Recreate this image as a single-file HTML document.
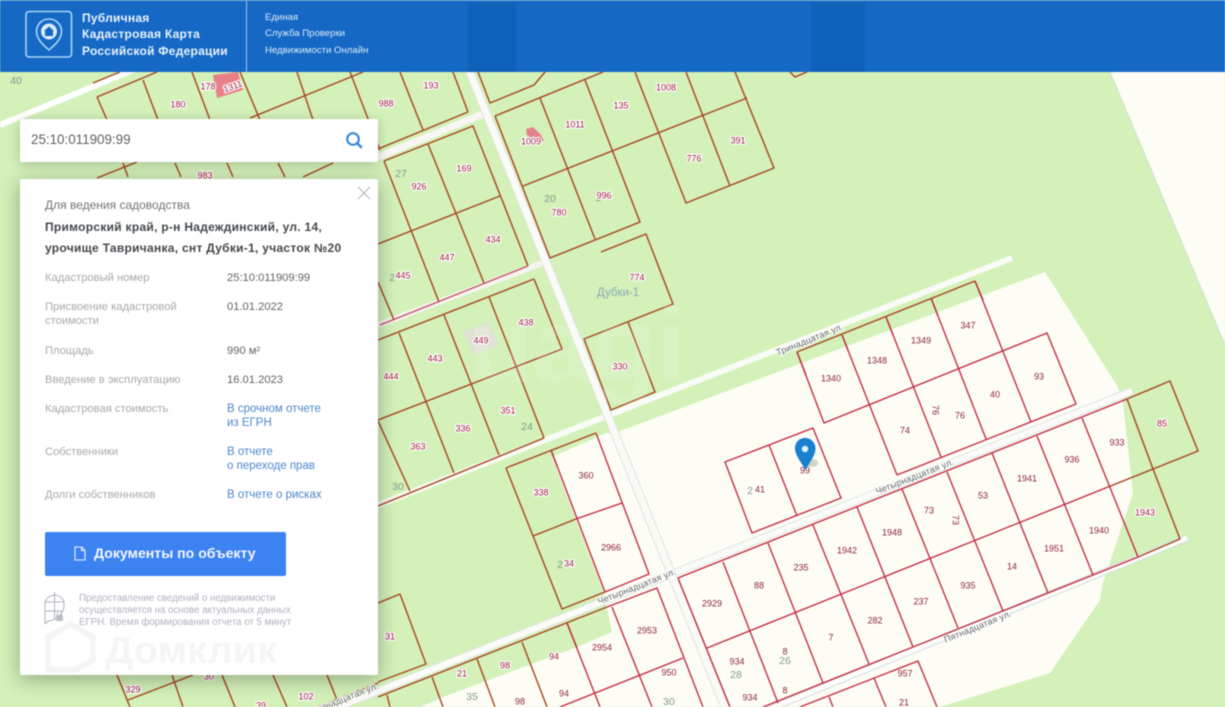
<!DOCTYPE html>
<html lang="ru"><head><meta charset="utf-8"><title>Публичная Кадастровая Карта</title>
<style>
html,body{margin:0;padding:0;width:1225px;height:707px;overflow:hidden;background:#d3f1b9}
*{box-sizing:border-box}
#wrap{position:absolute;left:0;top:0;width:1225px;height:707px;overflow:hidden;filter:blur(.45px);font-family:"Liberation Sans",sans-serif}
svg.map{position:absolute;left:0;top:0}
.b{fill:none;stroke:#a8431f;stroke-width:1.4}
.r{fill:none;stroke:#c4283f;stroke-width:1.35}
.l text{font:9px "Liberation Sans",sans-serif;text-anchor:middle;dominant-baseline:middle}
.h text{fill:#9c1c3c;paint-order:stroke;stroke:#fff;stroke-width:2.4px;stroke-linejoin:round}
.c text{fill:#8e2340}
.g text{fill:#7f9a8c;font-size:10.5px}
.s text{font:9px "Liberation Sans",sans-serif;fill:#5d6660;text-anchor:middle;dominant-baseline:middle;paint-order:stroke;stroke:#fff;stroke-width:2px;letter-spacing:.2px}
#hdr{position:absolute;left:0;top:0;width:1225px;height:72px;background:#1569c5;border-top:1px solid #4a8fd8}
#hdr .band{position:absolute;top:1px;height:70px;background:#1061ba}
#hdr .t{position:absolute;left:82px;color:#e8f3fc;font-weight:bold;font-size:12px;letter-spacing:.25px;white-space:nowrap;line-height:16px}
#hdr .u{position:absolute;left:265px;color:#dcebf9;font-size:9.6px;white-space:nowrap;line-height:16px}
#srch{position:absolute;left:20px;top:119px;width:358px;height:43px;background:#fff;border-radius:2px;box-shadow:0 2px 12px rgba(0,0,0,.22)}
#srch span{position:absolute;left:11px;top:13px;font-size:13.4px;line-height:16px;color:#5c5f63}
#panel{position:absolute;left:20px;top:179px;width:358px;height:496px;background:#fff;border-radius:2px;box-shadow:0 4px 20px rgba(0,0,0,.32)}
#panel div{position:absolute;white-space:nowrap}
.k{left:25px;color:#a6aaa9;font-size:11.2px;line-height:14px}
.v{left:207px;color:#5f6366;font-size:11.2px;line-height:14px}
.a{left:207px;color:#4b86cd;font-size:11.5px;line-height:14px}
#btn{left:25px;top:353px;width:241px;height:44px;background:#3c82f1;border-radius:2px;color:#f3f8ff;font-weight:bold;font-size:14.1px;line-height:43px;padding-left:49px}
.n{left:59px;color:#adb2bd;font-size:9.7px;line-height:12px}
</style></head><body><div id="wrap">
<svg class="map" width="1225" height="707" viewBox="0 0 1225 707">
<rect width="1225" height="707" fill="#d3f1b9"/>
<!-- cream zones -->
<polygon fill="#fdfdf5" points="1110,72 1225,72 1225,345"/>
<path d="M1110,72 L1225,345" stroke="#cfe0d8" stroke-width="1" fill="none"/>
<polygon fill="#fdfdf5" points="615,433 1045,272 1118,387 1123,403 1133,493 1123,523 1103,583 1100,600 1050,673 940,707 420,707 443,697 577,647 612,632 603,590 552,457 597,437 606,433"/>
<!-- roads -->
<g fill="none" stroke-linecap="butt">
<path d="M0,125 L133,70" stroke="#fff" stroke-width="6"/>
<path d="M378,157 L483,114" stroke="#f8f6f2" stroke-width="7"/>
<path d="M378,325 L545,262" stroke="#f5f5ef" stroke-width="6"/>
<path d="M380,325 L528,266" stroke="#c84a66" stroke-width="1.3"/>
<path d="M340,520 L1012,258" stroke="#f9fbf6" stroke-width="6"/>
<path d="M300,722 L1132,391" stroke="#dfe5e0" stroke-width="8"/>
<path d="M300,722 L1132,391" stroke="#fbfbf8" stroke-width="6"/>
<path d="M760,713 L1187,538" stroke="#cfdde0" stroke-width="7"/>
<path d="M760,713 L1187,538" stroke="#fdfdfa" stroke-width="5"/>
<path d="M469,70 L726,710" stroke="#dfe4de" stroke-width="9"/>
<path d="M469,70 L726,710" stroke="#fafaf7" stroke-width="7"/>
</g>
<!-- buildings -->
<polygon fill="#e8808a" points="213,75 238,72 243,90 217,98"/>
<polygon fill="#e4808c" points="526,129 533,127 541,135 544,141 532,139 527,135"/>
<polygon fill="#dfe3d3" points="463,332 489,322 499,345 473,355"/>
<!-- parcels on green (brown) -->
<g class="b">
<path d="M93,83 L120,72"/><path d="M97,97 L157,72"/><path d="M97,97 L107,120"/><path d="M143,80 L158,120"/><path d="M192,72 L210,120"/><path d="M240,72 L260,120"/><path d="M297,72 L313,120"/><path d="M350,72 L380,150"/><path d="M250,118 L363,72"/>
<path d="M400,72 L423,130"/><path d="M453,72 L468,112"/><path d="M378,149 L468,112"/><path d="M478,72 L490,103 L534,85 L545,72"/>
<path d="M495,116 L603,72"/><path d="M495,116 L550,258 L640,222 L585,80"/><path d="M540,98 L595,239"/><path d="M523,186 L747,98"/><path d="M635,72 L686,203 L774,168 L735,72"/><path d="M686,72 L730,186"/>
<path d="M790,72 L795,77 L807,72"/>
<path d="M384,161 L473,126 L528,266"/><path d="M384,161 L439,302"/><path d="M428,144 L484,283"/><path d="M378,244 L500,196"/><path d="M378,282 L394,320"/>
<path d="M601,252 L646,234 L673,304 L584,339 L611,410 L655,392 L628,322"/>
<path d="M534,279 L378,340"/><path d="M534,279 L562,349 L378,420"/><path d="M489,297 L544,438"/><path d="M444,315 L499,455"/><path d="M399,333 L454,473"/><path d="M378,421 L410,491"/><path d="M378,506 L544,438"/>
<path d="M506,468 L596,433"/><path d="M506,468 L562,609 L605,592"/><path d="M533,536 L576,519"/><path d="M551,450 L557,466"/>
<path d="M400,594 L426,664 L378,682"/><path d="M378,603 L400,594"/>
<path d="M378,697 L607,607"/><path d="M567,623 L577,648"/><path d="M522,642 L547,707"/><path d="M477,659 L495,707"/><path d="M432,677 L443,707"/><path d="M387,695 L390,707"/>
<path d="M117,675 L130,707"/><path d="M128,700 L193,675"/><path d="M172,675 L183,707"/><path d="M222,675 L235,707"/><path d="M273,675 L287,707"/><path d="M327,675 L337,700"/><path d="M317,707 L378,683"/>
<path d="M97,178 L137,162"/><path d="M123,163 L128,177"/><path d="M175,163 L181,177"/><path d="M227,163 L233,177"/><path d="M278,163 L285,177"/><path d="M303,177 L333,163"/>
<path d="M797,352 L975,281"/><path d="M1127,399 L1170,381 L1198,451 L1153,469 L1180,539 L1138,557"/><path d="M1127,399 L1153,469 L1108,487"/>
<path d="M797,352 L806,375"/><path d="M842,335 L848,350"/><path d="M886,317 L893,335"/><path d="M931,298 L938,316"/><path d="M975,281 L983,300"/>
</g>
<!-- parcels on cream (red) -->
<g class="r">
<path d="M797,352 L824,423 L1047,333 L1076,404 L897,475"/><path d="M842,335 L897,475"/><path d="M886,317 L941,457"/><path d="M931,298 L986,439"/><path d="M975,281 L1031,422"/>
<path d="M725,462 L813,428 L841,498 L752,533 Z"/><path d="M769,445 L797,516"/>
<path d="M678,578 L1127,399"/><path d="M678,578 L730,707"/><path d="M707,648 L1108,487"/><path d="M763,707 L1138,557"/>
<path d="M1082,418 L1138,557"/><path d="M1037,436 L1093,575"/><path d="M992,453 L1048,593"/><path d="M947,472 L1003,611"/><path d="M902,489 L958,628"/><path d="M857,507 L913,647"/><path d="M813,525 L869,664"/><path d="M768,543 L823,683"/><path d="M723,562 L778,703"/>
<path d="M800,707 L918,661 L937,707"/><path d="M874,678 L886,707"/><path d="M829,697 L833,707"/>
<path d="M596,433 L649,574 L605,592 L551,450"/><path d="M576,519 L622,503"/>
<path d="M607,607 L657,588 L703,707"/><path d="M612,607 L652,707"/><path d="M567,623 L600,707"/><path d="M683,658 L560,707"/>
</g>
<!-- watermark on map -->
<text x="468" y="382" font-family="Liberation Sans" font-weight="bold" font-size="106" fill="#fff" opacity=".13">uagi</text>
<!-- grey numbers -->
<g class="l g"><text x="16" y="81">40</text><text x="401" y="174">27</text><text x="550" y="199">20</text><text x="527" y="427">24</text><text x="398" y="487">30</text><text x="785" y="661">26</text><text x="736" y="675">28</text><text x="472" y="697">35</text><text x="669" y="702">30</text><text x="598" y="198">1</text><text x="392" y="278">2</text><text x="560" y="565">2</text><text x="750" y="491">2</text></g>
<!-- labels with halo -->
<g class="l h">
<text x="178" y="105">180</text><text x="208" y="87">178</text><text x="233" y="87" transform="rotate(-20 233 87)">1311</text><text x="386" y="104">988</text><text x="205" y="176">983</text><text x="431" y="86">193</text>
<text x="531" y="142">1009</text><text x="575" y="125">1011</text><text x="621" y="106">135</text><text x="666" y="88">1008</text><text x="738" y="141">391</text><text x="694" y="159">776</text><text x="604" y="196">996</text><text x="559" y="213">780</text>
<text x="419" y="187">926</text><text x="464" y="169">169</text><text x="493" y="240">434</text><text x="447" y="258">447</text><text x="403" y="276">445</text>
<text x="637" y="278">774</text><text x="526" y="323">438</text><text x="481" y="341">449</text><text x="435" y="359">443</text><text x="391" y="377">444</text><text x="620" y="367">330</text>
<text x="508" y="411">351</text><text x="463" y="429">336</text><text x="418" y="447">363</text><text x="541" y="493">338</text><text x="569" y="564">34</text>
<text x="390" y="637">31</text><text x="462" y="674">21</text><text x="505" y="666">98</text><text x="554" y="657">94</text><text x="1162" y="424">85</text><text x="1145" y="513">1943</text>
<text x="133" y="690">329</text><text x="209" y="677">30</text><text x="306" y="697">102</text><text x="261" y="706">39</text>
</g>
<!-- labels on cream -->
<g class="l c">
<text x="831" y="379">1340</text><text x="877" y="361">1348</text><text x="921" y="341">1349</text><text x="968" y="326">347</text><text x="1039" y="377">93</text><text x="995" y="395">40</text><text x="960" y="416">76</text><text x="935" y="410" transform="rotate(90 935 410)">76</text><text x="905" y="431">74</text>
<text x="760" y="490">41</text><text x="805" y="471">99</text><text x="1117" y="443">933</text><text x="1072" y="460">936</text><text x="1027" y="479">1941</text><text x="983" y="496">53</text><text x="929" y="511">73</text><text x="955" y="520" transform="rotate(90 955 520)">73</text><text x="892" y="533">1948</text><text x="847" y="551">1942</text>
<text x="801" y="568">235</text><text x="759" y="586">88</text><text x="712" y="604">2929</text><text x="1099" y="531">1940</text><text x="1054" y="549">1951</text><text x="1012" y="567">14</text><text x="968" y="586">935</text><text x="921" y="602">237</text><text x="875" y="621">282</text><text x="831" y="638">7</text><text x="785" y="652">8</text><text x="737" y="662">934</text><text x="750" y="698">934</text><text x="785" y="691">8</text><text x="905" y="674">957</text><text x="904" y="703">21</text>
<text x="586" y="476">360</text><text x="611" y="548">2966</text><text x="647" y="631">2953</text><text x="602" y="648">2954</text><text x="669" y="673">950</text><text x="564" y="694">94</text><text x="520" y="702">98</text>
</g>
<!-- street names -->
<g class="s">
<text x="810" y="340" transform="rotate(-22 810 340)">Тринадцатая ул.</text>
<text x="915" y="477" transform="rotate(-21.5 915 477)">Четырнадцатая ул.</text>
<text x="637" y="587" transform="rotate(-21.5 637 587)">Четырнадцатая ул.</text>
<text x="978" y="627" transform="rotate(-22 978 627)">Пятнадцатая ул.</text>
<text x="345" y="699" transform="rotate(-21.5 345 699)">Тринадцатая ул.</text>
</g>
<text x="618" y="296" text-anchor="middle" font-family="Liberation Sans" font-size="11.5" fill="#8aa8bc">Дубки-1</text>
<!-- pin -->
<ellipse cx="812" cy="463" rx="6" ry="4" fill="#6a7a60" opacity=".3"/>
<path d="M805,438 C798.5,438 795,443 795,448.5 C795,455 801,462 805.5,470 C810,462 815.5,455 815.5,448.5 C815.5,443 811.5,438 805,438 Z" fill="#1a7fcf"/>
<circle cx="805" cy="449" r="3.2" fill="#e6f2fb"/>
</svg>

<div id="hdr">
<div class="band" style="left:468px;width:48px"></div>
<div class="band" style="left:811px;width:54px"></div>
<svg style="position:absolute;left:0;top:-1px" width="250" height="72" viewBox="0 0 250 72">
<rect x="26" y="11.5" width="45.5" height="45.5" rx="3" fill="none" stroke="#a9d5f6" stroke-width="1.6"/>
<path d="M49,19 C42,19 36.500,24.500 36.500,31.500 C36.500,39.500 44,45.500 49,50 C54,45.500 61.500,39.500 61.500,31.500 C61.500,24.500 56,19 49,19 Z" fill="none" stroke="#a9d5f6" stroke-width="1.6"/>
<circle cx="49" cy="31.500" r="8" fill="#d9ecfb"/>
<path d="M44,31 L49,26.500 L54,31 L53,31 L53,36 L45,36 L45,31 Z" fill="#1569c5"/>
<rect x="246" y="1" width="1" height="71" fill="#9cc4ec"/>
</svg>
<div class="t" style="top:9px">Публичная</div>
<div class="t" style="top:25px">Кадастровая Карта</div>
<div class="t" style="top:42px">Российской Федерации</div>
<div class="u" style="top:9px">Единая</div>
<div class="u" style="top:25px">Служба Проверки</div>
<div class="u" style="top:42px">Недвижимости Онлайн</div>
</div>

<div id="srch"><span>25:10:011909:99</span>
<svg style="position:absolute;left:325px;top:12px" width="18" height="18" viewBox="0 0 18 18"><circle cx="8" cy="8" r="5.800" fill="none" stroke="#3a8ad9" stroke-width="2.200"/><path d="M12.200,12.200 L16,16" stroke="#3a8ad9" stroke-width="2.600" stroke-linecap="round"/></svg>
</div>

<div id="panel">
<svg style="position:absolute;left:337px;top:7px" width="14" height="14" viewBox="0 0 14 14"><path d="M1,1 L13,13 M13,1 L1,13" stroke="#b3b8bb" stroke-width="1.200" fill="none"/></svg>
<div style="left:25px;top:19px;font-size:12px;line-height:14px;color:#6f7378">Для ведения садоводства</div>
<div style="left:25px;top:38px;font-size:12px;font-weight:bold;line-height:20.500px;color:#44484c;letter-spacing:.28px">Приморский край, р-н Надеждинский, ул. 14,<br>урочище Тавричанка, снт Дубки-1, участок №20</div>
<div class="k" style="top:92px">Кадастровый номер</div><div class="v" style="top:92px">25:10:011909:99</div>
<div class="k" style="top:121px">Присвоение кадастровой<br>стоимости</div><div class="v" style="top:121px">01.01.2022</div>
<div class="k" style="top:165px">Площадь</div><div class="v" style="top:165px">990 м²</div>
<div class="k" style="top:194px">Введение в эксплуатацию</div><div class="v" style="top:194px">16.01.2023</div>
<div class="k" style="top:223px">Кадастровая стоимость</div><div class="a" style="top:223px">В срочном отчете<br>из ЕГРН</div>
<div class="k" style="top:266px">Собственники</div><div class="a" style="top:266px">В отчете<br>о переходе прав</div>
<div class="k" style="top:309px">Долги собственников</div><div class="a" style="top:309px">В отчете о рисках</div>
<div id="btn">Документы по объекту
<svg style="position:absolute;left:29px;top:14px" width="12" height="15" viewBox="0 0 12 15"><path d="M1,1 L7.500,1 L11,4.500 L11,14 L1,14 Z M7.500,1 L7.500,4.500 L11,4.500" fill="none" stroke="#eaf2ff" stroke-width="1.100"/></svg></div>
<svg style="position:absolute;left:24px;top:412px" width="22" height="36" viewBox="0 0 22 36"><g fill="none" stroke="#adb3bc" stroke-width="1"><path d="M1,33 L1,11 A10,10 0 0 1 20,11 L20,16 A17,17 0 0 1 4,30 L1,33"/><path d="M10.500,1 L10.500,28 M1,11 L20,11 M1,20 L18,20"/></g><rect x="12" y="24" width="7" height="6" rx="1" fill="#b9bec6"/><path d="M13.500,24 L13.500,22 A2,2 0 0 1 17.500,22 L17.500,24" fill="none" stroke="#b9bec6"/></svg>
<div class="n" style="top:414px">Предоставление сведений о недвижимости</div>
<div class="n" style="top:426px">осуществляется на основе актуальных данных</div>
<div class="n" style="top:438px">ЕГРН. Время формирования отчета от 5 минут</div>
<svg style="position:absolute;left:25px;top:441px" width="240" height="56" viewBox="0 0 240 56"><path d="M26,4 L48,17 L48,40 L30,50 L3,50 L3,17 Z" fill="none" stroke="#f4f5f5" stroke-width="6"/><text x="60" y="43" font-family="Liberation Sans" font-weight="bold" font-size="38" fill="#f4f5f5" textLength="172" lengthAdjust="spacingAndGlyphs">Домклик</text></svg>
</div>
</div></body></html>
